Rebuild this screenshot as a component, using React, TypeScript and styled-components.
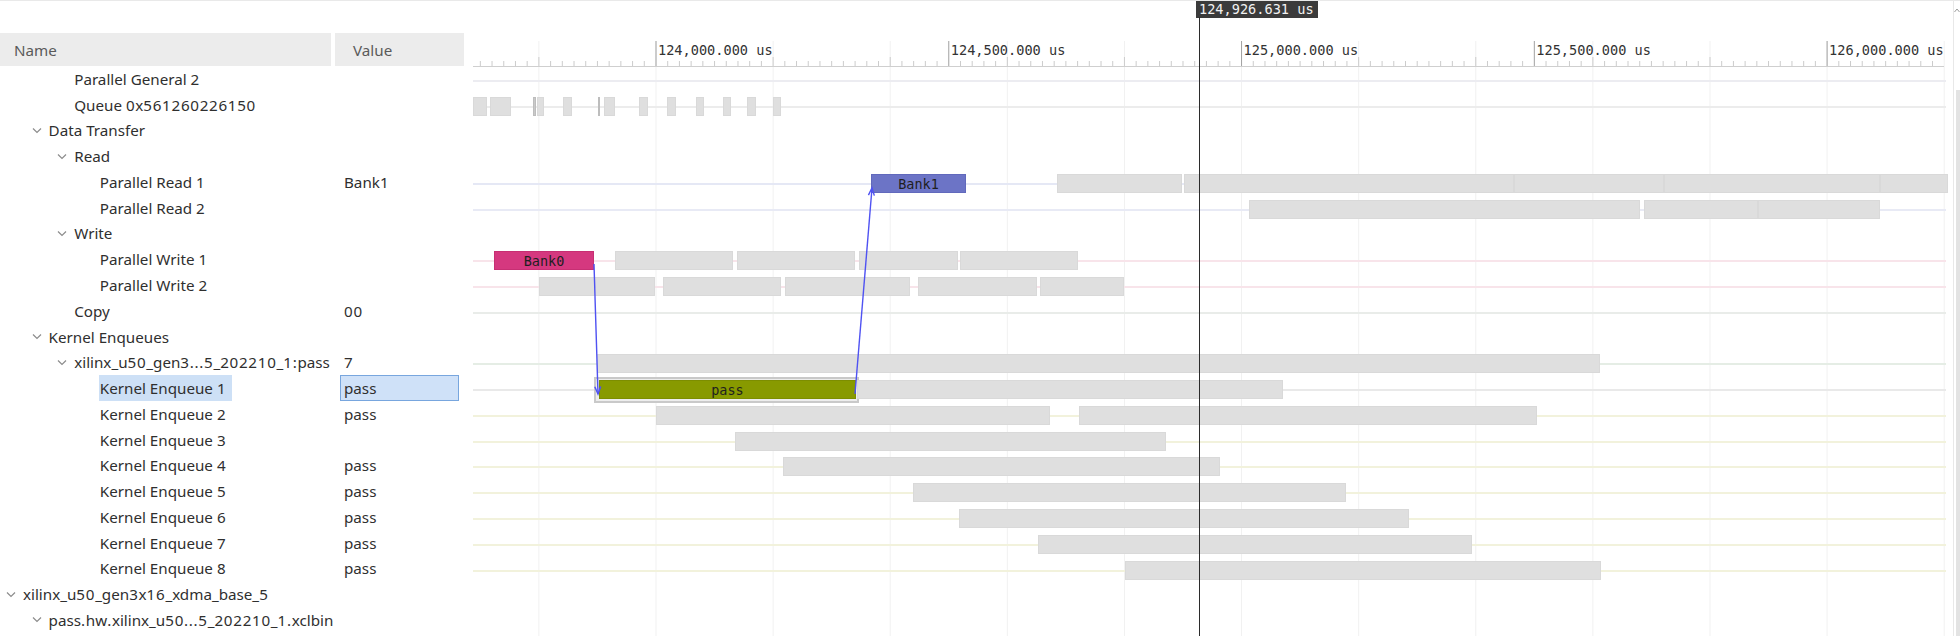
import React from 'react';
import styled, { createGlobalStyle } from 'styled-components';

const GlobalStyle = createGlobalStyle`
  html, body {
    margin: 0;
    padding: 0;
    background: #ffffff;
  }
  body {
    font-family: "Noto Sans", "Open Sans", sans-serif;
    overflow: hidden;
  }
`;

const ROW_H = 25.77;
const LEFT_W = 466;
const TIMELINE_W = 1484;
const MINOR_PX = 11.711; // 20 us
const ORIGIN_X = 656 - LEFT_W; // canvas x of 124,000 us

type Kind = 'gray' | 'dark' | 'bank0' | 'bank1' | 'pass';

interface Bar {
  x0: number; // page x
  x1: number;
  kind?: Kind;
  label?: string;
  selected?: boolean;
}

interface Row {
  label: string;
  level: number;
  expandable?: boolean;
  value?: string;
  selected?: boolean;
  line?: string;
  bars?: Bar[];
}

const g = (x0: number, x1: number, kind: Kind = 'gray'): Bar => ({ x0, x1, kind });

const KERNEL_LINE = '#f2f2dc';

const rows: Row[] = [
  { label: 'Parallel General 2', level: 2, line: '#ececf1' },
  {
    label: 'Queue 0x561260226150',
    level: 2,
    line: '#ececec',
    bars: [
      g(473, 487), g(490, 511), g(533, 536, 'dark'), g(537, 544), g(563, 572),
      g(598, 599, 'dark'), g(604, 615), g(639, 648), g(667, 676), g(696, 704),
      g(723, 731), g(747, 756), g(773, 781),
    ],
  },
  { label: 'Data Transfer', level: 1, expandable: true },
  { label: 'Read', level: 2, expandable: true },
  {
    label: 'Parallel Read 1',
    level: 3,
    value: 'Bank1',
    line: '#e5e8f5',
    bars: [
      { x0: 871, x1: 966, kind: 'bank1', label: 'Bank1' },
      g(1057, 1182), g(1184, 1514), g(1514, 1664), g(1664, 1880), g(1880, 1948),
    ],
  },
  {
    label: 'Parallel Read 2',
    level: 3,
    line: '#e8eaf5',
    bars: [g(1249, 1640), g(1644, 1758), g(1758, 1880)],
  },
  { label: 'Write', level: 2, expandable: true },
  {
    label: 'Parallel Write 1',
    level: 3,
    line: '#f8e4ea',
    bars: [
      { x0: 494, x1: 594, kind: 'bank0', label: 'Bank0' },
      g(615, 733), g(737, 855), g(859, 958), g(960, 1078),
    ],
  },
  {
    label: 'Parallel Write 2',
    level: 3,
    line: '#f8e4ea',
    bars: [g(539, 655), g(663, 781), g(785, 910), g(918, 1037), g(1040, 1124)],
  },
  { label: 'Copy', level: 2, value: '00', line: '#e9ece9' },
  { label: 'Kernel Enqueues', level: 1, expandable: true },
  {
    label: 'xilinx_u50_gen3...5_202210_1:pass',
    level: 2,
    expandable: true,
    value: '7',
    line: '#e5ede5',
    bars: [g(597, 1600)],
  },
  {
    label: 'Kernel Enqueue 1',
    level: 3,
    value: 'pass',
    selected: true,
    line: '#e9e9e9',
    bars: [{ x0: 599, x1: 856, kind: 'pass', label: 'pass', selected: true }, g(857, 1283)],
  },
  { label: 'Kernel Enqueue 2', level: 3, value: 'pass', line: KERNEL_LINE, bars: [g(656, 1050), g(1079, 1537)] },
  { label: 'Kernel Enqueue 3', level: 3, line: KERNEL_LINE, bars: [g(735, 1166)] },
  { label: 'Kernel Enqueue 4', level: 3, value: 'pass', line: KERNEL_LINE, bars: [g(783, 1220)] },
  { label: 'Kernel Enqueue 5', level: 3, value: 'pass', line: KERNEL_LINE, bars: [g(913, 1346)] },
  { label: 'Kernel Enqueue 6', level: 3, value: 'pass', line: KERNEL_LINE, bars: [g(959, 1409)] },
  { label: 'Kernel Enqueue 7', level: 3, value: 'pass', line: KERNEL_LINE, bars: [g(1038, 1472)] },
  { label: 'Kernel Enqueue 8', level: 3, value: 'pass', line: KERNEL_LINE, bars: [g(1125, 1601)] },
  { label: 'xilinx_u50_gen3x16_xdma_base_5', level: 0, expandable: true },
  { label: 'pass.hw.xilinx_u50...5_202210_1.xclbin', level: 1, expandable: true },
];

const barColors: Record<Kind, { bg: string; border: string }> = {
  gray: { bg: '#dfdfdf', border: '#d9d9d9' },
  dark: { bg: '#c9c9c9', border: '#bdbdbd' },
  bank0: { bg: '#d5387f', border: '#c72f73' },
  bank1: { bg: '#6c74c6', border: '#6169bc' },
  pass: { bg: '#889a00', border: '#7d8e00' },
};

/* ---------- layout ---------- */

const Page = styled.div`
  display: flex;
  width: 1960px;
  height: 636px;
  border-top: 1px solid #e9e9e9;
  box-sizing: border-box;
  overflow: hidden;
`;

const TreePanel = styled.div`
  width: ${LEFT_W}px;
  flex-shrink: 0;
  padding-top: 32px;
  color: #2f2f2f;
  font-size: 15.2px;
`;

const HeaderRow = styled.div`
  display: grid;
  grid-template-columns: 331px 129px;
  column-gap: 4px;
  height: 33px;
`;

const HeaderCell = styled.div<{ $pad: number }>`
  background: #ececec;
  color: #5a5a5a;
  padding-left: ${p => p.$pad}px;
  display: flex;
  align-items: center;
`;

const TreeRow = styled.div`
  display: grid;
  grid-template-columns: 335px 131px;
  height: ${ROW_H}px;
  white-space: nowrap;
`;

const NameCell = styled.div<{ $level: number }>`
  display: flex;
  align-items: center;
  padding-left: ${p => 6 + p.$level * 25.6}px;
  overflow: hidden;
`;

const ChevronSlot = styled.span`
  width: 17px;
  flex-shrink: 0;
  display: flex;
  align-items: center;
`;

const NameText = styled.span<{ $selected?: boolean }>`
  display: flex;
  align-items: center;
  height: 100%;
  margin-left: -1px;
  padding: 0 6px 0 1px;
  background: ${p => (p.$selected ? '#cde0f6' : 'transparent')};
`;

/* digits and punctuation are drawn wider in this UI font */
const Wide = styled.span`
  letter-spacing: 0.7px;
`;

const ValueCell = styled.div`
  padding: 0 7px 0 5px;
  display: flex;
`;

const ValueText = styled.span<{ $selected?: boolean }>`
  flex: 1;
  display: flex;
  align-items: center;
  padding-left: 3px;
  border: 1px solid ${p => (p.$selected ? '#78a6de' : 'transparent')};
  background: ${p => (p.$selected ? '#cfe1f8' : 'transparent')};
`;

const Timeline = styled.div`
  position: relative;
  width: ${TIMELINE_W}px;
  flex-shrink: 0;
`;

const Ruler = styled.div`
  position: relative;
  height: 65px;
  z-index: 1;
`;

const TickLabel = styled.span`
  position: absolute;
  top: 41px;
  font-family: "DejaVu Sans Mono", "Liberation Mono", monospace;
  font-size: 13.6px;
  line-height: 16px;
  color: #333;
  white-space: nowrap;
`;

const CursorTag = styled.div`
  position: absolute;
  top: -1px;
  height: 18px;
  padding: 0 4px 0 3px;
  background: #3b3b3b;
  color: #f2f2f2;
  font-family: "DejaVu Sans Mono", "Liberation Mono", monospace;
  font-size: 13.6px;
  line-height: 18px;
  white-space: nowrap;
  z-index: 5;
`;

const Lanes = styled.div`
  position: relative;
  z-index: 1;
`;

const Lane = styled.div<{ $line?: string }>`
  position: relative;
  height: ${ROW_H}px;

  &::before {
    content: '';
    position: absolute;
    left: 7px;
    right: 4px;
    top: 14px;
    height: 2px;
    background: ${p => p.$line ?? 'transparent'};
  }
`;

const BarBox = styled.div<{ $kind: Kind }>`
  position: absolute;
  top: 5px;
  height: 19px;
  box-sizing: border-box;
  background: ${p => barColors[p.$kind].bg};
  border: 1px solid ${p => barColors[p.$kind].border};
  display: flex;
  align-items: center;
  justify-content: center;
  font-family: "DejaVu Sans Mono", "Liberation Mono", monospace;
  font-size: 13.5px;
  color: #1f1f1f;
  z-index: 2;
`;

const SelectFrame = styled.div`
  position: absolute;
  top: 2px;
  height: 26px;
  box-sizing: border-box;
  border: 2px solid #c9c9c9;
  background: #ededed;
  z-index: 1;
`;

const Backdrop = styled.svg`
  position: absolute;
  left: 0;
  top: 0;
  z-index: 0;
`;

const RulerArt = styled.svg`
  position: absolute;
  left: 0;
  top: 0;
`;

const Overlay = styled.svg`
  position: absolute;
  left: 0;
  top: 0;
  z-index: 4;
  pointer-events: none;
`;

const Scrollbar = styled.div`
  flex: 1;
  padding-left: 3px;
  display: flex;
`;

const ScrollTrack = styled.div`
  flex: 1;
  border-left: 1px solid #e8e8e8;
  display: flex;
  flex-direction: column;
`;

const ScrollArrow = styled.div`
  height: 89px;
  display: flex;
  justify-content: flex-end;
  padding-top: 7px;
  box-sizing: border-box;
`;

const ScrollThumb = styled.div`
  flex: 1;
  margin-left: 2px;
  background: #e3e3e3;
`;

/* ---------- pieces ---------- */

const Label: React.FC<{ text?: string }> = ({ text }) => (
  <span>
    {(text ?? '')
      .split(/([0-9.:]+)/)
      .map((part, i) => (/[0-9.:]/.test(part) ? <Wide key={i}>{part}</Wide> : part))}
  </span>
);

const Chevron: React.FC = () => (
  <svg width="10" height="7" viewBox="0 0 10 7">
    <polyline points="1,1.5 5,5.5 9,1.5" fill="none" stroke="#8c8c8c" strokeWidth="1.2" />
  </svg>
);

const formatUs = (us: number) =>
  `${us.toLocaleString('en-US', { minimumFractionDigits: 3, maximumFractionDigits: 3 })} us`;

const RulerTicks: React.FC = () => {
  const ticks: React.ReactNode[] = [];
  for (let k = -15; ; k++) {
    const x = ORIGIN_X + k * MINOR_PX;
    if (x > TIMELINE_W - 6) break;
    const big = k % 25 === 0;
    const mid = k % 10 === 0;
    const y0 = big ? 40 : mid ? 56 : 60;
    ticks.push(
      <line key={k} x1={x} x2={x} y1={y0} y2={66} stroke={big ? '#a0a0a0' : '#cccccc'} strokeWidth="1" />
    );
  }
  return <>{ticks}</>;
};

const GridLines: React.FC = () => {
  const lines: React.ReactNode[] = [];
  for (let k = -10; ; k += 10) {
    const x = ORIGIN_X + k * MINOR_PX;
    if (x > TIMELINE_W - 4) break;
    lines.push(<line key={k} x1={x} x2={x} y1={40} y2={636} stroke="#f1f1f1" strokeWidth="1" />);
  }
  return <>{lines}</>;
};

const Arrow: React.FC<{ x1: number; y1: number; x2: number; y2: number }> = ({ x1, y1, x2, y2 }) => {
  const a = Math.atan2(y2 - y1, x2 - x1);
  const len = 8;
  const spread = 0.38;
  const p1 = [x2 - len * Math.cos(a - spread), y2 - len * Math.sin(a - spread)];
  const p2 = [x2 - len * Math.cos(a + spread), y2 - len * Math.sin(a + spread)];
  return (
    <g stroke="#4f52f2" strokeWidth="1.4" fill="none">
      <line x1={x1} y1={y1} x2={x2} y2={y2} />
      <polyline points={`${p1[0]},${p1[1]} ${x2},${y2} ${p2[0]},${p2[1]}`} />
    </g>
  );
};

const labels = [0, 25, 50, 75, 100].map(k => ({
  x: ORIGIN_X + k * MINOR_PX,
  text: formatUs(124000 + k * 20),
}));

const CURSOR_X = 1199 - LEFT_W;

const App: React.FC = () => {
  return (
    <>
      <GlobalStyle />
      <Page>
        <TreePanel>
          <HeaderRow>
            <HeaderCell $pad={14}>Name</HeaderCell>
            <HeaderCell $pad={18}>Value</HeaderCell>
          </HeaderRow>
          {rows.map(r => (
            <TreeRow key={r.label}>
              <NameCell $level={r.level}>
                <ChevronSlot>{r.expandable && <Chevron />}</ChevronSlot>
                <NameText $selected={r.selected}>
                  <Label text={r.label} />
                </NameText>
              </NameCell>
              <ValueCell>
                <ValueText $selected={r.selected}>
                  <Label text={r.value} />
                </ValueText>
              </ValueCell>
            </TreeRow>
          ))}
        </TreePanel>

        <Timeline>
          <Backdrop width={TIMELINE_W} height={636}>
            <GridLines />
          </Backdrop>

          <Ruler>
            <RulerArt width={TIMELINE_W} height={66}>
              <RulerTicks />
              <line x1={7} x2={TIMELINE_W - 6} y1={65.5} y2={65.5} stroke="#cfcfcf" strokeWidth="1" />
            </RulerArt>
            {labels.map(l => (
              <TickLabel key={l.text} style={{ left: l.x + 2 }}>
                {l.text}
              </TickLabel>
            ))}
            <CursorTag style={{ left: CURSOR_X - 3 }}>124,926.631 us</CursorTag>
          </Ruler>

          <Lanes>
            {rows.map(r => (
              <Lane key={r.label} $line={r.line}>
                {r.bars?.map((b, i) => (
                  <React.Fragment key={i}>
                    {b.selected && (
                      <SelectFrame style={{ left: b.x0 - 5 - LEFT_W, width: b.x1 - b.x0 + 8 }} />
                    )}
                    <BarBox
                      $kind={b.kind ?? 'gray'}
                      style={{ left: b.x0 - LEFT_W, width: b.x1 - b.x0 }}
                    >
                      {b.label}
                    </BarBox>
                  </React.Fragment>
                ))}
              </Lane>
            ))}
          </Lanes>

          <Overlay width={TIMELINE_W} height={636}>
            <line x1={CURSOR_X + 0.5} x2={CURSOR_X + 0.5} y1={16} y2={636} stroke="#2b2b2b" strokeWidth="1" />
            <Arrow x1={594 - LEFT_W} y1={263} x2={598 - LEFT_W} y2={393} />
            <Arrow x1={855 - LEFT_W} y1={393} x2={872 - LEFT_W} y2={187} />
          </Overlay>
        </Timeline>

        <Scrollbar>
          <ScrollTrack>
            <ScrollArrow>
              <svg width="6" height="5" viewBox="0 0 6 5">
                <polyline points="0.5,4 3,1 5.5,4" fill="none" stroke="#9a9a9a" strokeWidth="1" />
              </svg>
            </ScrollArrow>
            <ScrollThumb />
          </ScrollTrack>
        </Scrollbar>
      </Page>
    </>
  );
};

export default App;
